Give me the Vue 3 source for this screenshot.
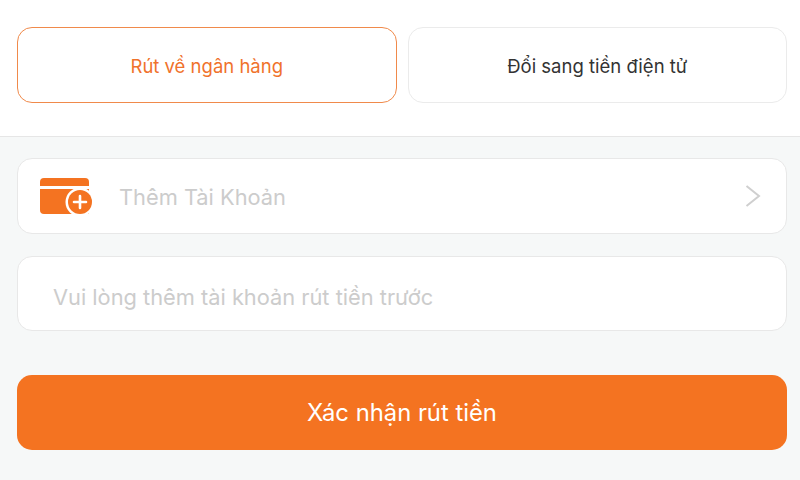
<script setup>
const tabs = [
  { label: 'Rút về ngân hàng', active: true },
  { label: 'Đổi sang tiền điện tử', active: false },
]
</script>

<template>
  <div class="page">
    <div class="tabs">
      <div v-for="tab in tabs" :key="tab.label" class="tab" :class="{ active: tab.active }">{{ tab.label }}</div>
    </div>
    <div class="content">
      <div class="box account">
        <svg class="card-icon" width="53" height="36" viewBox="0 0 53 36">
          <path d="M0 4a4 4 0 0 1 4-4h41a4 4 0 0 1 4 4v4H0z" fill="#f47321" />
          <path d="M0 11h49v25H4a4 4 0 0 1-4-4z" fill="#f47321" />
          <circle cx="40" cy="24" r="14.5" fill="#fff" />
          <circle cx="40" cy="24" r="12" fill="#f47321" />
          <path d="M40 18v12M34 24h12" stroke="#fff" stroke-width="2.6" stroke-linecap="round" />
        </svg>
        <span class="placeholder">Thêm Tài Khoản</span>
        <svg class="chevron" width="16" height="24" viewBox="0 0 16 24">
          <path d="M1.5 2l12.5 10L1.5 22" fill="none" stroke="#cfcfcf" stroke-width="2" />
        </svg>
      </div>
      <div class="box amount">
        <span class="placeholder">Vui lòng thêm tài khoản rút tiền trước</span>
      </div>
      <button class="submit">Xác nhận rút tiền</button>
    </div>
  </div>
</template>

<style scoped>
.page {
  width: 800px;
  height: 480px;
  display: flex;
  flex-direction: column;
  font-family: Inter, "Liberation Sans", sans-serif;
  background: #f6f8f8;
  overflow: hidden;
}
.tabs {
  height: 137px;
  box-sizing: border-box;
  padding: 27px 13px 33px 17px;
  display: flex;
  gap: 11px;
  background: #fff;
  border-bottom: 1px solid #e6e6e6;
}
.tab {
  flex: 1;
  display: flex;
  align-items: center;
  justify-content: center;
  padding-top: 1px;
  border: 1px solid #ebebeb;
  border-radius: 15px;
  font-size: 18.5px;
  color: #333;
}
.tab.active {
  border-color: #f08a4b;
  color: #f0722b;
}
.content {
  flex: 1;
  display: flex;
  flex-direction: column;
  padding: 21px 13px 0 17px;
}
.box {
  height: 76px;
  box-sizing: border-box;
  display: flex;
  align-items: center;
  background: #fff;
  border: 1px solid #e8e8e8;
  border-radius: 15px;
}
.account {
  padding: 0 25px 0 22px;
}
.account .placeholder {
  padding-top: 1px;
}
.amount {
  margin-top: 22px;
  height: 75px;
  padding: 6px 0 0 35px;
}
.card-icon {
  flex: none;
  margin-right: 26px;
}
.placeholder {
  font-size: 21.8px;
  color: #cccccc;
}
.chevron {
  margin-left: auto;
}
.submit {
  margin-top: 44px;
  height: 75px;
  border: none;
  border-radius: 15px;
  background: #f47321;
  color: #fff;
  font-family: inherit;
  font-size: 23.8px;
}
</style>
